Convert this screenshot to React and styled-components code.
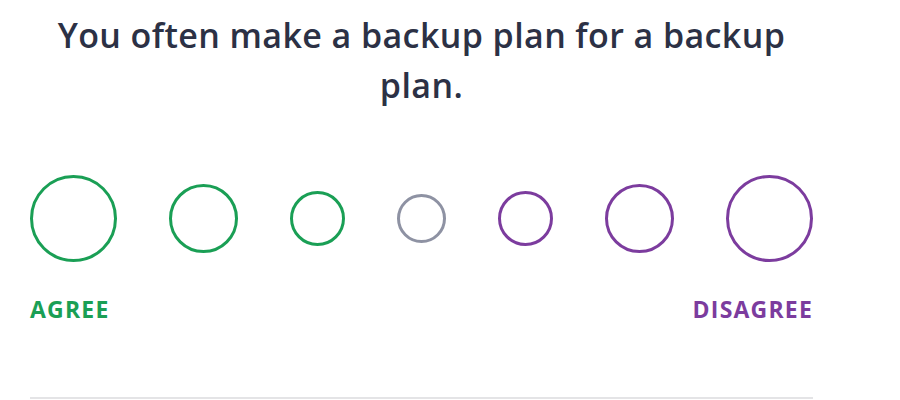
import React from 'react'
import styled, { createGlobalStyle } from 'styled-components'

const GlobalStyle = createGlobalStyle`
  body {
    margin: 0;
    background: #ffffff;
    font-family: "Open Sans", "Noto Sans", sans-serif;
  }
`

const Question = styled.div`
  width: 783px;
  margin-left: 30px;
  padding-top: 10px;
`

const Title = styled.h2`
  margin: 0;
  font-size: 34px;
  font-weight: 600;
  letter-spacing: 0.4px;
  line-height: 50px;
  color: #2c3145;
  text-align: center;
`

const Options = styled.div`
  display: flex;
  align-items: center;
  justify-content: space-between;
  height: 88px;
  margin-top: 64px;
`

const colors = {
  agree: '#1a9f55',
  neutral: '#8e92a3',
  disagree: '#7c3c9e',
}

const Circle = styled.button`
  flex: none;
  width: ${p => p.size}px;
  height: ${p => p.size}px;
  padding: 0;
  border-radius: 50%;
  border: 3px solid ${p => colors[p.tone]};
  background: transparent;
  cursor: pointer;
`

const Labels = styled.div`
  display: flex;
  justify-content: space-between;
  margin-top: 33px;
`

const Label = styled.span`
  font-size: 23px;
  font-weight: 700;
  letter-spacing: 1.2px;
  line-height: 28px;
  color: ${p => colors[p.tone]};
`

const Divider = styled.hr`
  margin: 74px 0 0;
  border: none;
  border-top: 2px solid #e4e4e6;
`

const options = [
  { size: 87, tone: 'agree' },
  { size: 69, tone: 'agree' },
  { size: 55, tone: 'agree' },
  { size: 49, tone: 'neutral' },
  { size: 55, tone: 'disagree' },
  { size: 69, tone: 'disagree' },
  { size: 87, tone: 'disagree' },
]

export default function App() {
  return (
    <>
      <GlobalStyle />
      <Question>
        <Title>You often make a backup plan for a backup plan.</Title>
        <Options>
          {options.map((o, i) => (
            <Circle key={i} size={o.size} tone={o.tone} aria-label={`option ${i + 1}`} />
          ))}
        </Options>
        <Labels>
          <Label tone="agree">AGREE</Label>
          <Label tone="disagree">DISAGREE</Label>
        </Labels>
        <Divider />
      </Question>
    </>
  )
}
